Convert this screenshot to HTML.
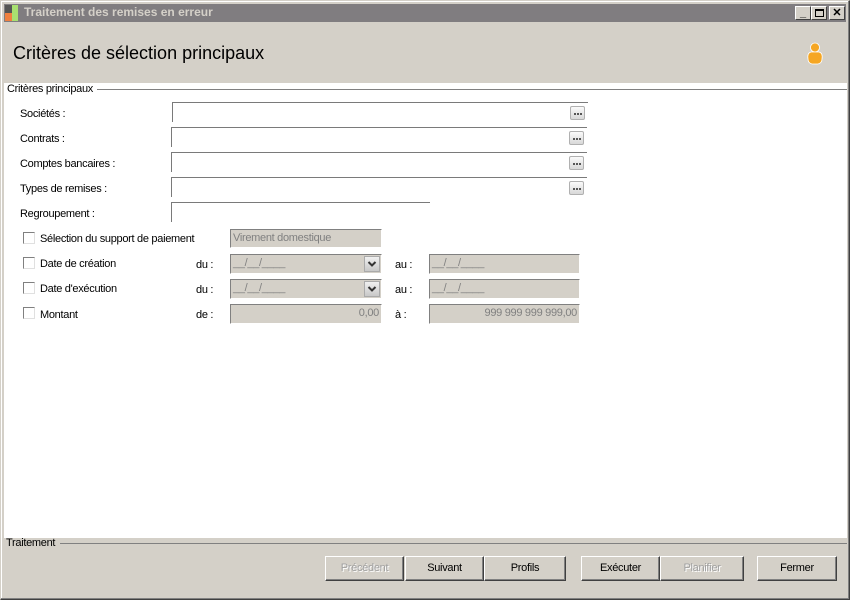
<!DOCTYPE html>
<html><head><meta charset="utf-8"><style>
*{margin:0;padding:0;box-sizing:border-box}
body{width:850px;height:600px;background:#d4d0c8;position:relative;overflow:hidden;font-family:"Liberation Sans",sans-serif;font-size:11px;color:#000}
.a{position:absolute}
.t{position:absolute;font-size:11px;letter-spacing:-0.3px;white-space:nowrap;margin-top:1px}
.in{position:absolute;border-top:1px solid #7a7a7a;border-left:1px solid #7a7a7a;background:#fff}
.dots{position:absolute;width:15px;height:14px;border:1px solid #b0b0b0;border-radius:2px;background:linear-gradient(#fafafa,#d8d8d8)}
.dots i{position:absolute;top:6px;width:2px;height:2px;background:#555}
.g{position:absolute;background:#d4d0c8;border-top:1px solid #808080;border-left:1px solid #808080;border-bottom:1px solid #fff;border-right:1px solid #fff;color:#808080;font-size:11px;letter-spacing:-0.3px;line-height:17px;padding:0 2px;white-space:nowrap}
.cb{position:absolute;width:12px;height:12px;border:1px solid #808080;border-right-color:#e0e0e0;border-bottom-color:#e0e0e0;background:#fff}
.dd{position:absolute;width:16px;height:16px;border:1px solid #aaa;background:linear-gradient(#f0f0f0,#c8c8c8);right:1px;top:1px}
.btn{position:absolute;top:556px;height:25px;background:#d4d0c8;border:1px solid;border-color:#fff #404040 #404040 #fff;box-shadow:inset -1px -1px #808080;text-align:center;line-height:23px;font-size:11px;letter-spacing:-0.3px}
.wb{position:absolute;top:6px;width:16px;height:14px;background:#d4d0c8;border:1px solid;border-color:#fff #404040 #404040 #fff;font-size:11px;line-height:12px;text-align:center;font-weight:bold}
</style></head><body>
<div class="a" style="left:0;top:0;width:850px;height:600px;border:1px solid #d4d0c8;border-right-color:#404040;border-bottom-color:#404040;box-shadow:inset -1px -1px #808080,inset 1px 1px #fff"></div>
<div class="a" style="left:4px;top:4px;width:842px;height:18px;background:#807d80"></div>
<div class="a" style="left:5px;top:5px;width:7px;height:16px;background:#555"></div>
<div class="a" style="left:5px;top:13px;width:7px;height:8px;background:#f08040"></div>
<div class="a" style="left:12px;top:5px;width:6px;height:16px;background:#a8e070"></div>
<div class="t" style="left:24px;top:4px;color:#d4d0c8;font-weight:bold;font-size:12px;letter-spacing:0">Traitement des remises en erreur</div>
<div class="wb" style="left:795px">_</div>
<div class="wb" style="left:811px"><span style="display:inline-block;width:9px;height:8px;border:1px solid #000;border-top-width:2px;margin-top:2px"></span></div>
<div class="wb" style="left:829px">✕</div>
<div class="t" style="left:13px;top:42px;font-size:18px;letter-spacing:0">Critères de sélection principaux</div>
<svg class="a" style="left:805px;top:42px" width="20" height="24" viewBox="0 0 20 24"><circle cx="10" cy="5.5" r="4.5" fill="#f5a623" stroke="#fff" stroke-width="0.8"/><path d="M3 17 Q2 11 6 10 L14 10 Q18 11 17 17 Q17 21 13 22 L7 22 Q3 21 3 17 Z" fill="#f5a623" stroke="#fff" stroke-width="0.8"/></svg>
<div class="a" style="left:4px;top:83px;width:843px;height:455px;background:#fff"></div>
<div class="a" style="left:97px;top:89px;width:750px;height:1px;background:#808080"></div>
<div class="t" style="left:7px;top:82px">Critères principaux</div>
<div class="t" style="left:20px;top:107px">Sociétés :</div>
<div class="in" style="left:172px;top:102px;width:416px;height:20px"></div>
<div class="dots" style="left:570px;top:106px"><i style="left:3px"></i><i style="left:6px"></i><i style="left:9px"></i></div>
<div class="t" style="left:20px;top:132px">Contrats :</div>
<div class="in" style="left:171px;top:127px;width:416px;height:20px"></div>
<div class="dots" style="left:569px;top:131px"><i style="left:3px"></i><i style="left:6px"></i><i style="left:9px"></i></div>
<div class="t" style="left:20px;top:157px">Comptes bancaires :</div>
<div class="in" style="left:171px;top:152px;width:416px;height:20px"></div>
<div class="dots" style="left:569px;top:156px"><i style="left:3px"></i><i style="left:6px"></i><i style="left:9px"></i></div>
<div class="t" style="left:20px;top:182px">Types de remises :</div>
<div class="in" style="left:171px;top:177px;width:416px;height:20px"></div>
<div class="dots" style="left:569px;top:181px"><i style="left:3px"></i><i style="left:6px"></i><i style="left:9px"></i></div>
<div class="t" style="left:20px;top:207px">Regroupement :</div>
<div class="in" style="left:171px;top:202px;width:259px;height:20px"></div>
<div class="cb" style="left:23px;top:232px"></div><div class="t" style="left:40px;top:232px">Sélection du support de paiement</div>
<div class="g" style="left:230px;top:229px;width:152px;height:19px">Virement domestique</div>
<div class="cb" style="left:23px;top:257px"></div><div class="t" style="left:40px;top:257px">Date de création</div>
<div class="t" style="left:196px;top:258px">du :</div>
<div class="g" style="left:230px;top:254px;width:152px;height:20px">__/__/____<div class="dd"><svg width="14" height="14" style="position:absolute;left:0;top:0"><path d="M3.5 5 L7 8.5 L10.5 5" fill="none" stroke="#333" stroke-width="2"/></svg></div></div>
<div class="t" style="left:395px;top:258px">au :</div>
<div class="g" style="left:429px;top:254px;width:151px;height:20px">__/__/____</div>
<div class="cb" style="left:23px;top:282px"></div><div class="t" style="left:40px;top:282px">Date d'exécution</div>
<div class="t" style="left:196px;top:283px">du :</div>
<div class="g" style="left:230px;top:279px;width:152px;height:20px">__/__/____<div class="dd"><svg width="14" height="14" style="position:absolute;left:0;top:0"><path d="M3.5 5 L7 8.5 L10.5 5" fill="none" stroke="#333" stroke-width="2"/></svg></div></div>
<div class="t" style="left:395px;top:283px">au :</div>
<div class="g" style="left:429px;top:279px;width:151px;height:20px">__/__/____</div>
<div class="cb" style="left:23px;top:307px"></div><div class="t" style="left:40px;top:308px">Montant</div>
<div class="t" style="left:196px;top:308px">de :</div>
<div class="g" style="left:230px;top:304px;width:152px;height:20px;text-align:right">0,00</div>
<div class="t" style="left:395px;top:308px">à :</div>
<div class="g" style="left:429px;top:304px;width:151px;height:20px;text-align:right">999 999 999 999,00</div>
<div class="a" style="left:60px;top:543px;width:787px;height:1px;background:#808080"></div>
<div class="t" style="left:6px;top:536px">Traitement</div>
<div class="btn" style="left:325px;width:79px;color:#a0a0a0;text-shadow:1px 1px #fff">Précédent</div>
<div class="btn" style="left:405px;width:79px">Suivant</div>
<div class="btn" style="left:484px;width:82px">Profils</div>
<div class="btn" style="left:581px;width:79px">Exécuter</div>
<div class="btn" style="left:660px;width:84px;color:#a0a0a0;text-shadow:1px 1px #fff">Planifier</div>
<div class="btn" style="left:757px;width:80px">Fermer</div>
</body></html>
